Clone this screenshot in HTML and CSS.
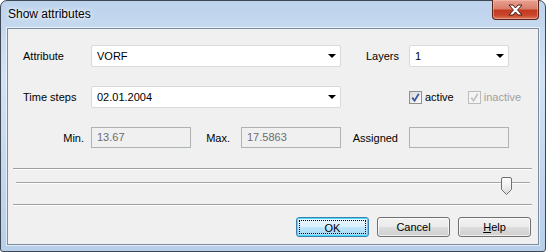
FILE: index.html
```html
<!DOCTYPE html>
<html lang="en">

<head>
  <meta charset="UTF-8">
  <title>Show attributes</title>
  <link rel="stylesheet" href="styles.css">
</head>

<body>

  <!-- Dialog window -->
  <div class="window">
    <div class="titlebar">
      <span class="title">Show attributes</span>
      <div class="close-btn">
        <svg width="15" height="12" viewBox="0 0 15 12">
          <path d="M1 1 H5 L7.5 4 L10 1 H14 L9.6 6 L14 11 H10 L7.5 8 L5 11 H1 L5.4 6 Z"
                fill="#fff" stroke="#4a1c14" stroke-width="1" stroke-linejoin="round"/>
        </svg>
      </div>
    </div>

    <div class="client">
      <!-- Attribute / Layers -->
      <div class="row">
        <label class="lbl">Attribute</label>
        <div class="combo combo-wide">VORF<span class="arrow"></span></div>
        <label class="lbl lbl-layers">Layers</label>
        <div class="combo combo-small">1<span class="arrow"></span></div>
      </div>

      <!-- Time steps -->
      <div class="row">
        <label class="lbl">Time steps</label>
        <div class="combo combo-wide">02.01.2004<span class="arrow"></span></div>
        <div class="checks">
          <span class="check">
            <span class="box">
              <svg width="9" height="9" viewBox="0 0 9 9"><path d="M1.2 4.6 L3.6 7.6 L7.8 0.8" fill="none" stroke="#3f5596" stroke-width="1.8"/></svg>
            </span>
            active
          </span>
          <span class="check disabled">
            <span class="box">
              <svg width="9" height="9" viewBox="0 0 9 9"><path d="M1.2 4.6 L3.6 7.6 L7.8 0.8" fill="none" stroke="#c4c4c4" stroke-width="1.8"/></svg>
            </span>
            inactive
          </span>
        </div>
      </div>

      <!-- Min / Max / Assigned -->
      <div class="row row-values">
        <label class="lbl lbl-right lbl-min">Min.</label>
        <div class="field">13.67</div>
        <label class="lbl lbl-right lbl-max">Max.</label>
        <div class="field">17.5863</div>
        <label class="lbl lbl-right lbl-assigned">Assigned</label>
        <div class="field"></div>
      </div>

      <div class="separator"></div>

      <!-- Time slider -->
      <div class="slider">
        <div class="track">
          <div class="thumb">
            <svg width="11" height="18" viewBox="0 0 11 18">
              <defs>
                <linearGradient id="tg" x1="0" y1="0" x2="0" y2="1">
                  <stop offset="0" stop-color="#fdfdfd"/>
                  <stop offset="0.5" stop-color="#f0f0f0"/>
                  <stop offset="1" stop-color="#d8d8d8"/>
                </linearGradient>
              </defs>
              <path d="M2 0.5 H9 Q10.5 0.5 10.5 2 V12.5 L5.5 17.5 L0.5 12.5 V2 Q0.5 0.5 2 0.5 Z"
                    fill="url(#tg)" stroke="#707070"/>
            </svg>
          </div>
        </div>
      </div>

      <div class="separator"></div>

      <!-- Buttons -->
      <div class="buttons">
        <button class="btn btn-default"><span class="focus">OK</span></button>
        <button class="btn">Cancel</button>
        <button class="btn"><u>H</u>elp</button>
      </div>
    </div>
  </div>

</body>

</html>
```

FILE: styles.css
```css
/* Basic Reset */
* {
  margin: 0;
  padding: 0;
  box-sizing: border-box;
}

body {
  font-family: "Liberation Sans", Arial, sans-serif;
  font-size: 11px;
  color: #000;
  background: #fff;
}

/* Window frame */
.window {
  width: 546px;
  height: 252px;
  border: 1px solid #3d4756;
  border-radius: 7px 7px 3px 3px;
  padding: 0 6px 6px 6px;
  background: linear-gradient(to bottom, #bdd3ec 0%, #d3e3f4 30%, #c6daef 60%, #b9cfe9 100%);
  display: flex;
  flex-direction: column;
}

.titlebar {
  height: 27px;
  display: flex;
  justify-content: space-between;
  align-items: flex-start;
}

.title {
  font-size: 12px;
  line-height: 15px;
  padding: 6px 0 0 1px;
  color: #000;
  text-shadow: 0 0 6px #fff, 0 0 3px #fff;
}

.close-btn {
  width: 47px;
  height: 20px;
  margin-top: -1px;
  border: 1px solid #5b2419;
  border-top: none;
  border-radius: 0 0 4px 4px;
  background: linear-gradient(to bottom, #e8a192 0%, #d97f6b 45%, #c23a22 55%, #c9452b 80%, #dc7a5c 100%);
  box-shadow: inset 0 0 0 1px rgba(255, 200, 190, 0.45);
  display: flex;
  align-items: center;
  justify-content: center;
}

/* Client area */
.client {
  flex: 1;
  border: 1px solid #7a8ca2;
  background: #f0f0f0;
  box-shadow: 0 0 0 1px rgba(255, 255, 255, 0.6);
  padding-top: 16px;
  display: flex;
  flex-direction: column;
}

.row {
  display: flex;
  align-items: center;
  height: 22px;
  padding-left: 15px;
  margin-bottom: 19px;
}

.lbl {
  width: 68px;
  white-space: nowrap;
}

.lbl-layers {
  width: 43px;
  margin-left: 25px;
}

.combo {
  position: relative;
  height: 22px;
  line-height: 20px;
  background: #fff;
  border: 1px solid #dadada;
  border-radius: 2px;
  padding-left: 5px;
}

.combo-wide {
  width: 250px;
}

.combo-small {
  width: 100px;
}

.arrow {
  position: absolute;
  right: 4px;
  top: 8px;
  width: 0;
  height: 0;
  border-top: 4px solid #000;
  border-left: 4px solid transparent;
  border-right: 4px solid transparent;
}

/* Checkboxes */
.checks {
  display: flex;
  margin-left: 68px;
  gap: 14px;
}

.check {
  display: flex;
  align-items: center;
  gap: 3px;
}

.check.disabled {
  color: #a0a0a0;
}

.box {
  width: 13px;
  height: 13px;
  border: 1px solid #8e8f8f;
  background: linear-gradient(135deg, #d8d8d8, #fdfdfd);
  display: flex;
  align-items: center;
  justify-content: center;
}

.check.disabled .box {
  border-color: #bcbcbc;
  background: #f4f4f4;
}

/* Value fields */
.row-values {
  height: 21px;
  padding-left: 0;
  margin-bottom: 20px;
}

.lbl-right {
  text-align: right;
  padding-right: 11px;
}

.lbl-min {
  width: 83px;
  padding-right: 7px;
}

.lbl-max {
  width: 50px;
}

.lbl-assigned {
  width: 68px;
}

.field {
  width: 100px;
  height: 21px;
  line-height: 19px;
  border: 1px solid #adb2b5;
  background: #f0f0f0;
  color: #6d6d6d;
  padding-left: 5px;
}

/* Separators and slider */
.separator {
  height: 2px;
  margin: 0 6px 0 5px;
  border-top: 1px solid #a0a0a0;
  border-bottom: 1px solid #fff;
}

.slider {
  height: 34px;
  padding-top: 12px;
}

.track {
  position: relative;
  margin-left: 8px;
  width: 514px;
  height: 2px;
  border-top: 1px solid #a4a4a4;
  border-bottom: 1px solid #fdfdfd;
}

.thumb {
  position: absolute;
  left: 485px;
  top: -6px;
  line-height: 0;
}

/* Buttons */
.buttons {
  display: flex;
  justify-content: flex-end;
  gap: 8px;
  padding: 11px 7px 0 0;
}

.btn {
  width: 73px;
  height: 20px;
  font-family: "Liberation Sans", Arial, sans-serif;
  font-size: 11px;
  color: #000;
  border: 1px solid #707070;
  border-radius: 3px;
  background: linear-gradient(to bottom, #f2f2f2 0%, #ebebeb 48%, #dddddd 52%, #cfcfcf 100%);
  box-shadow: inset 0 0 0 1px rgba(255, 255, 255, 0.7);
}

.btn-default {
  border-color: #3c7fb1;
  background: linear-gradient(to bottom, #eaf6fd 0%, #d9f0fc 48%, #bee6fd 52%, #a7d9f5 100%);
  box-shadow: inset 0 0 0 1px #48dcfb;
  padding: 2px;
}

.focus {
  display: block;
  height: 100%;
  line-height: 14px;
  border: 1px dotted #000;
}
```
